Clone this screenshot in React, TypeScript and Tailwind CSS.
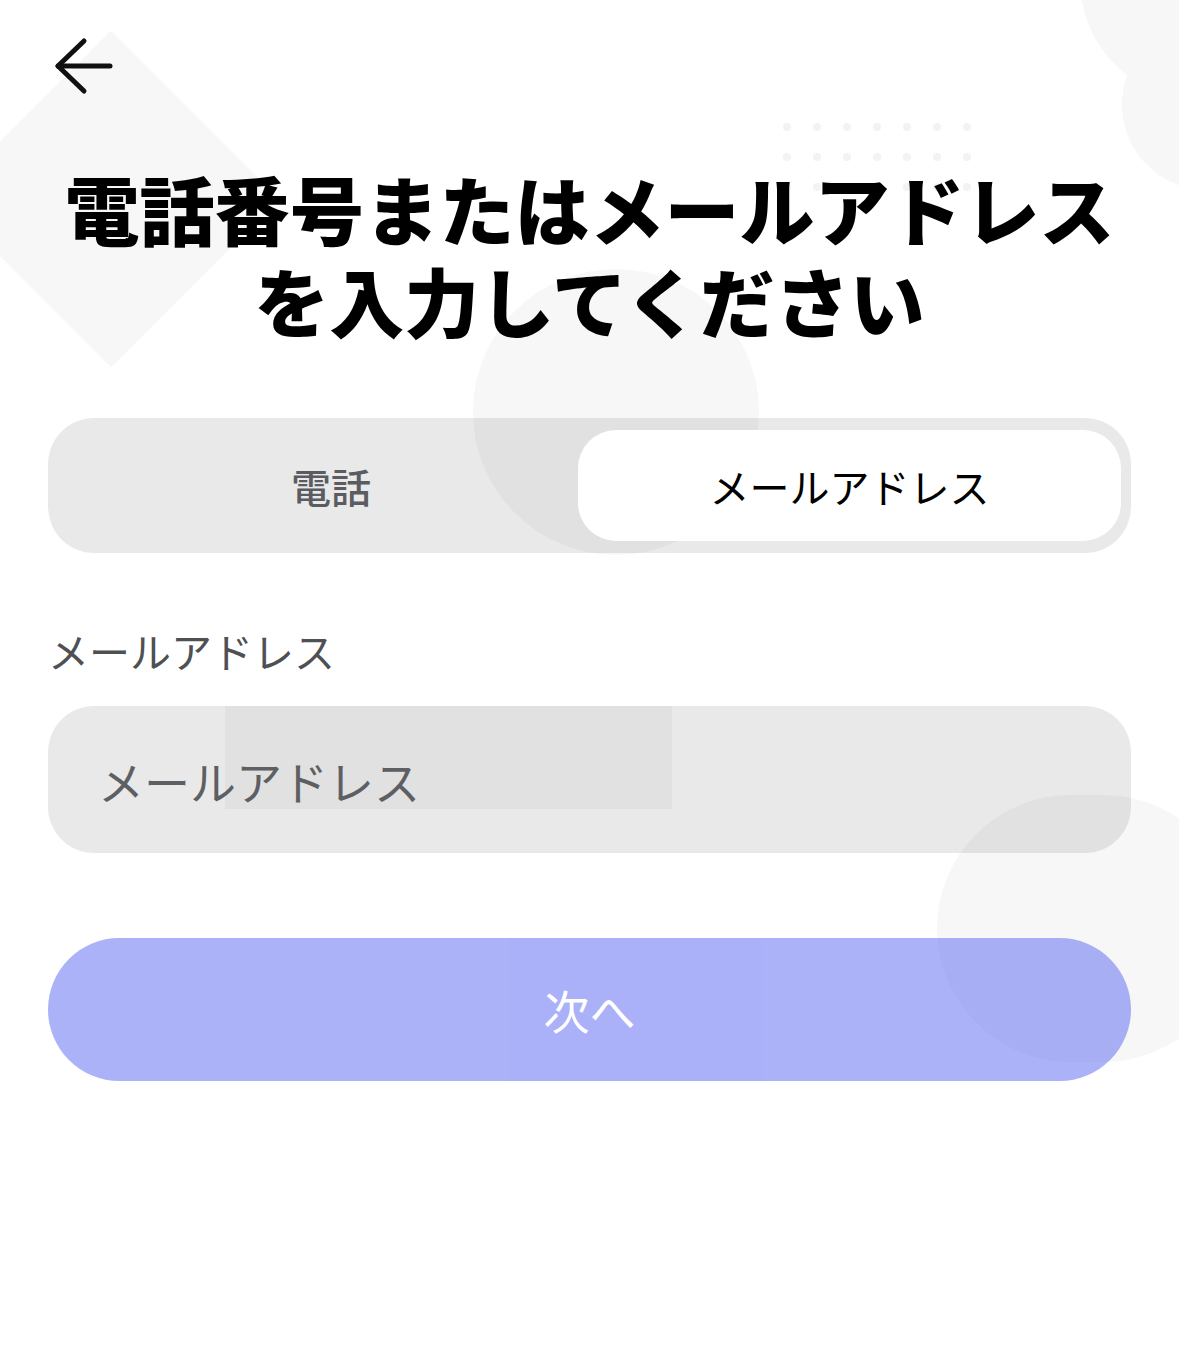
import { useState } from "react";

const DOT_ROWS = [0, 1, 2];
const DOT_COLS = [0, 1, 2, 3, 4, 5, 6];

function Decorations() {
  return (
    <div className="pointer-events-none absolute inset-0">
      {/* diamond at the left */}
      <div className="absolute left-[-8px] top-[80px] h-[238px] w-[238px] rotate-45 bg-[#f7f7f7]" />
      {/* top right blob */}
      <div className="absolute left-[1080px] top-[-140px] h-[240px] w-[240px] rounded-full bg-[#f7f7f7]" />
      <div className="absolute left-[1122px] top-[20px] h-[170px] w-[200px] rounded-full bg-[#f7f7f7]" />
      {/* dots */}
      <div className="absolute left-[783px] top-[123px] grid grid-cols-7 gap-x-[22px] gap-y-[22px]">
        {DOT_ROWS.map((r) =>
          DOT_COLS.map((c) => (
            <span key={`${r}-${c}`} className="h-2 w-2 rounded-full bg-[#f3f3f3]" />
          ))
        )}
      </div>
      {/* middle circle */}
      <div className="absolute left-[473px] top-[269px] h-[286px] w-[286px] rounded-full bg-[#f7f7f7]" />
      {/* rect behind input */}
      <div className="absolute left-[225px] top-[706px] h-[103px] w-[447px] bg-[#f7f7f7]" />
      {/* bottom right blob */}
      <div className="absolute left-[937px] top-[795px] h-[267px] w-[300px] rounded-[140px] bg-[#f7f7f7]" />
    </div>
  );
}

export default function App() {
  const [tab, setTab] = useState<"phone" | "email">("email");

  return (
    <div className="relative min-h-screen overflow-hidden bg-white font-['Noto_Sans_CJK_JP','Noto_Sans',sans-serif]">
      <Decorations />

      <div className="relative px-12">
        <div className="pl-[6px] pt-[36px]">
          <svg width="60" height="60" viewBox="0 0 60 60" fill="none" stroke="#111" strokeWidth="5" strokeLinecap="round" strokeLinejoin="round">
            <path d="M56 30H4" />
            <path d="M30 5 4 30l26 25" />
          </svg>
        </div>

        <h1 className="-mx-10 mt-[66px] whitespace-nowrap text-center text-[75px] font-black leading-[92px] text-black">
          電話番号またはメールアドレス
          <br />
          を入力してください
        </h1>

        <div className="mt-[72px] grid h-[135px] grid-cols-[1fr_543px] rounded-[46px] bg-black/[0.085] py-3 pl-3 pr-[10px]">
          <button
            onClick={() => setTab("phone")}
            className={`rounded-[38px] pl-6 text-[40px] ${
              tab === "phone" ? "bg-white text-black" : "font-medium text-[#5b5c61]"
            }`}
          >
            電話
          </button>
          <button
            onClick={() => setTab("email")}
            className={`rounded-[38px] text-[40px] ${
              tab === "email" ? "bg-white text-black" : "font-medium text-[#5b5c61]"
            }`}
          >
            メールアドレス
          </button>
        </div>

        <p className="mt-[73px] text-[41px] leading-[48px] text-[#4f5054]">メールアドレス</p>

        <input
          type="text"
          placeholder="メールアドレス"
          className="mt-[32px] block h-[147px] w-full rounded-[46px] bg-black/[0.085] pl-[50px] text-[46px] text-black outline-none placeholder:text-[#5e5f63]"
        />

        <button className="mt-[85px] block h-[143px] w-full rounded-full bg-[#5865f2] text-[46px] text-white opacity-50">
          次へ
        </button>
      </div>
    </div>
  );
}
